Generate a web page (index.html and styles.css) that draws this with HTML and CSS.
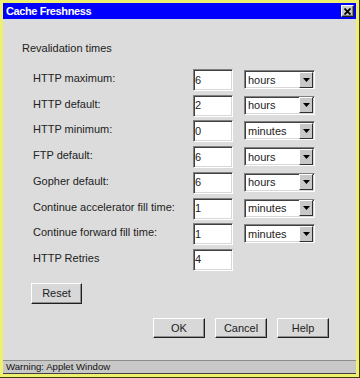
FILE: index.html
```html
<!DOCTYPE html>
<html lang="en">
<head>
  <meta charset="UTF-8">
  <meta name="viewport" content="width=device-width, initial-scale=1.0">
  <title>Cache Freshness</title>
  <link rel="stylesheet" href="styles.css">
</head>
<body>
  <div class="frame">
    <div class="window">
      <!-- Title bar -->
      <div class="titlebar">
        <span class="title">Cache Freshness</span>
        <button class="close" title="Close">
          <svg width="7" height="7" viewBox="0 0 7 7"><path d="M0.5 0.5L6.5 6.5M6.5 0.5L0.5 6.5" stroke="#000" stroke-width="1.8"/></svg>
        </button>
      </div>

      <div class="content">
        <p class="section">Revalidation times</p>

        <div class="fields">
          <label>HTTP maximum:</label>
          <input class="field" type="text" value="6">
          <div class="select"><span>hours</span><span class="arrow"><svg width="7" height="4" viewBox="0 0 7 4"><path d="M0 0H7L3.5 4Z" fill="#000"/></svg></span></div>

          <label>HTTP default:</label>
          <input class="field" type="text" value="2">
          <div class="select"><span>hours</span><span class="arrow"><svg width="7" height="4" viewBox="0 0 7 4"><path d="M0 0H7L3.5 4Z" fill="#000"/></svg></span></div>

          <label>HTTP minimum:</label>
          <input class="field" type="text" value="0">
          <div class="select"><span>minutes</span><span class="arrow"><svg width="7" height="4" viewBox="0 0 7 4"><path d="M0 0H7L3.5 4Z" fill="#000"/></svg></span></div>

          <label>FTP default:</label>
          <input class="field" type="text" value="6">
          <div class="select"><span>hours</span><span class="arrow"><svg width="7" height="4" viewBox="0 0 7 4"><path d="M0 0H7L3.5 4Z" fill="#000"/></svg></span></div>

          <label>Gopher default:</label>
          <input class="field" type="text" value="6">
          <div class="select"><span>hours</span><span class="arrow"><svg width="7" height="4" viewBox="0 0 7 4"><path d="M0 0H7L3.5 4Z" fill="#000"/></svg></span></div>

          <label>Continue accelerator fill time:</label>
          <input class="field" type="text" value="1">
          <div class="select"><span>minutes</span><span class="arrow"><svg width="7" height="4" viewBox="0 0 7 4"><path d="M0 0H7L3.5 4Z" fill="#000"/></svg></span></div>

          <label>Continue forward fill time:</label>
          <input class="field" type="text" value="1">
          <div class="select"><span>minutes</span><span class="arrow"><svg width="7" height="4" viewBox="0 0 7 4"><path d="M0 0H7L3.5 4Z" fill="#000"/></svg></span></div>

          <label>HTTP Retries</label>
          <input class="field" type="text" value="4">
        </div>

        <button class="btn reset">Reset</button>

        <div class="actions">
          <button class="btn">OK</button>
          <button class="btn">Cancel</button>
          <button class="btn">Help</button>
        </div>
      </div>

      <div class="status">Warning: Applet Window</div>
    </div>
  </div>
</body>
</html>
```

FILE: styles.css
```css
body {
  margin: 0;
  font-family: "Liberation Sans", Arial, sans-serif;
  font-size: 11px;
  color: #222;
}

.frame {
  width: 360px;
  height: 378px;
  box-sizing: border-box;
  padding: 3px;
  background-color: #f0f070;
  border-right: 1px solid #3c3c10;
  border-bottom: 1px solid #3c3c10;
}

.window {
  height: 100%;
  display: flex;
  flex-direction: column;
  background-color: #dcdcdc;
}

.titlebar {
  height: 16px;
  display: flex;
  align-items: center;
  justify-content: space-between;
  padding: 0 2px 0 3px;
  background-color: #0000ff;
}

.title {
  color: white;
  font-weight: bold;
  letter-spacing: -0.4px;
}

.close {
  width: 13px;
  height: 12px;
  padding: 0;
  display: flex;
  align-items: center;
  justify-content: center;
  background-color: #c8c8c8;
  border: 1px solid;
  border-color: #ffffff #202020 #202020 #ffffff;
  box-shadow: inset -1px -1px 0 #808080;
}

.content {
  flex: 1;
  padding: 23px 27px 0 19px;
}

.section {
  margin: 0;
  line-height: 13px;
}

.fields {
  display: grid;
  grid-template-columns: 149px 40px 71px;
  grid-auto-rows: 22px;
  column-gap: 11px;
  row-gap: 3.71px;
  margin: 14px 0 0 11px;
}

.fields label {
  line-height: 18px;
  white-space: nowrap;
}

.field {
  width: 40px;
  height: 22px;
  box-sizing: border-box;
  margin: 0;
  padding: 0 0 1px 1px;
  font-family: inherit;
  font-size: 11px;
  color: #222;
  background-color: white;
  border: 1px solid;
  border-color: #808080 #ffffff #ffffff #808080;
  box-shadow: inset 1px 1px 0 #404040, inset -1px -1px 0 #d8d8d8;
  outline: none;
}

.select {
  height: 19px;
  margin-top: 1px;
  box-sizing: border-box;
  display: flex;
  align-items: center;
  justify-content: space-between;
  padding: 0 1px 0 3px;
  background-color: white;
  border: 1px solid;
  border-color: #808080 #ffffff #ffffff #808080;
  box-shadow: inset 1px 1px 0 #404040, inset -1px -1px 0 #d8d8d8;
}

.arrow {
  width: 12px;
  height: 14px;
  display: flex;
  align-items: center;
  justify-content: center;
  background-color: #c8c8c8;
  border: 1px solid;
  border-color: #ffffff #303030 #303030 #ffffff;
}

.btn {
  width: 52px;
  height: 20px;
  padding: 0;
  font-family: inherit;
  font-size: 11px;
  color: #222;
  background-color: #d8d8d8;
  border: 1px solid;
  border-color: #ffffff #202020 #202020 #ffffff;
  box-shadow: inset -1px -1px 0 #909090;
  cursor: pointer;
}

.reset {
  display: block;
  width: 51px;
  height: 21px;
  margin: 12px 0 0 9px;
}

.actions {
  display: flex;
  justify-content: flex-end;
  gap: 10px;
  margin-top: 14px;
}

.status {
  height: 14px;
  box-sizing: border-box;
  padding-left: 3px;
  font-size: 9.6px;
  line-height: 12px;
  color: #111;
  background-color: #c8c8c8;
  border-top: 1px solid #8c8c8c;
  border-bottom: 1px solid #404040;
}
```
